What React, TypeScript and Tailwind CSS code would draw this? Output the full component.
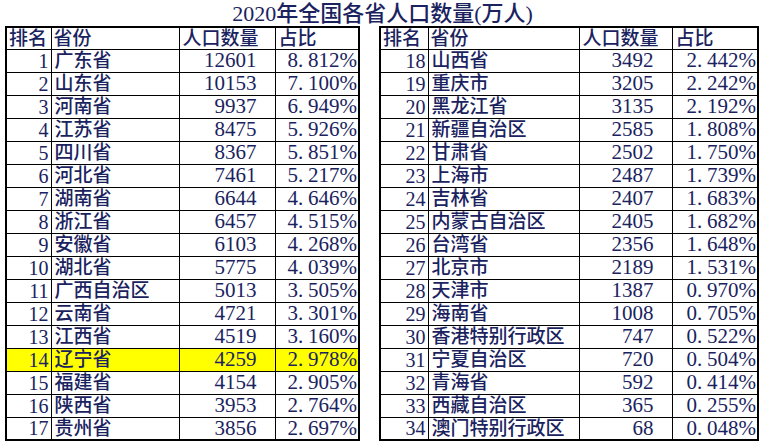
const DATA: [number, string, number, string][] = [
  [1, '广东省', 12601, '8.812%'],
  [2, '山东省', 10153, '7.100%'],
  [3, '河南省', 9937, '6.949%'],
  [4, '江苏省', 8475, '5.926%'],
  [5, '四川省', 8367, '5.851%'],
  [6, '河北省', 7461, '5.217%'],
  [7, '湖南省', 6644, '4.646%'],
  [8, '浙江省', 6457, '4.515%'],
  [9, '安徽省', 6103, '4.268%'],
  [10, '湖北省', 5775, '4.039%'],
  [11, '广西自治区', 5013, '3.505%'],
  [12, '云南省', 4721, '3.301%'],
  [13, '江西省', 4519, '3.160%'],
  [14, '辽宁省', 4259, '2.978%'],
  [15, '福建省', 4154, '2.905%'],
  [16, '陕西省', 3953, '2.764%'],
  [17, '贵州省', 3856, '2.697%'],
  [18, '山西省', 3492, '2.442%'],
  [19, '重庆市', 3205, '2.242%'],
  [20, '黑龙江省', 3135, '2.192%'],
  [21, '新疆自治区', 2585, '1.808%'],
  [22, '甘肃省', 2502, '1.750%'],
  [23, '上海市', 2487, '1.739%'],
  [24, '吉林省', 2407, '1.683%'],
  [25, '内蒙古自治区', 2405, '1.682%'],
  [26, '台湾省', 2356, '1.648%'],
  [27, '北京市', 2189, '1.531%'],
  [28, '天津市', 1387, '0.970%'],
  [29, '海南省', 1008, '0.705%'],
  [30, '香港特别行政区', 747, '0.522%'],
  [31, '宁夏自治区', 720, '0.504%'],
  [32, '青海省', 592, '0.414%'],
  [33, '西藏自治区', 365, '0.255%'],
  [34, '澳门特别行政区', 68, '0.048%'],
];

const FONT = { fontFamily: '"Liberation Serif", "Noto Sans CJK SC", serif' };

function Pct({ value }: { value: string }) {
  const [a, b] = value.split('.');
  return (
    <>
      {a}
      <span className="inline-block w-[10px] text-left">.</span>
      {b}
    </>
  );
}

function Table({ rows, widths }: { rows: typeof DATA; widths: number[] }) {
  return (
    <table className="border-collapse border-2 border-black text-[19px] leading-none text-[#1a2360]" style={FONT}>
      <colgroup>
        {widths.map((w, i) => (
          <col key={i} style={{ width: w }} />
        ))}
      </colgroup>
      <thead>
        <tr className="h-[22px]">
          <th className="border border-black px-[2px] text-left font-medium">排名</th>
          <th className="border border-black px-[2px] text-left font-medium">省份</th>
          <th className="border border-black px-[3px] text-left font-medium">人口数量</th>
          <th className="border border-black px-[3px] text-left font-medium">占比</th>
        </tr>
      </thead>
      <tbody>
        {rows.map(([rank, name, pop, pct]) => (
          <tr key={rank} className={`h-[23px] ${rank === 14 ? 'bg-[#ffff00]' : ''}`}>
            <td className="border border-black px-[2px] text-right text-[20px]">{rank}</td>
            <td className="border border-black px-[3px] text-left font-medium">{name}</td>
            <td className="border border-black pr-[18px] text-right text-[21px]">{pop}</td>
            <td className="border border-black pr-[1px] text-right text-[21px]">
              <Pct value={pct} />
            </td>
          </tr>
        ))}
      </tbody>
    </table>
  );
}

export default function App() {
  return (
    <div className="w-[765px] h-[445px] bg-white overflow-hidden" style={FONT}>
      <h1 className="h-[26px] pt-[2px] text-center text-[22px] leading-[23px] font-medium text-[#1a2360]">
        2020年全国各省人口数量(万人)
      </h1>
      <div className="flex gap-[19px] pl-[5px]">
        <Table rows={DATA.slice(0, 17)} widths={[45, 128, 96, 84]} />
        <Table rows={DATA.slice(17)} widths={[48, 151, 93, 86]} />
      </div>
    </div>
  );
}
